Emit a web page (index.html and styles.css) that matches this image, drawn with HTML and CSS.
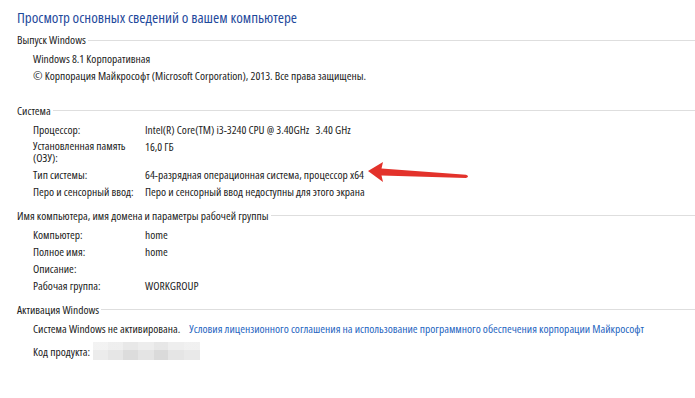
FILE: index.html
```html
<!DOCTYPE html>
<html lang="ru">
<head>
<meta charset="utf-8">
<link rel="stylesheet" href="styles.css">
</head>
<body>
<div class="page">
  <h1 class="title">Просмотр основных сведений о вашем компьютере</h1>

  <section class="group first">
    <div class="group-head"><span>Выпуск Windows</span></div>
    <div class="plain">Windows 8.1 Корпоративная</div>
    <div class="plain">© Корпорация Майкрософт (Microsoft Corporation), 2013. Все права защищены.</div>
  </section>

  <section class="group">
    <div class="group-head"><span>Система</span></div>
    <div class="row"><div class="k">Процессор:</div><div class="v">Intel(R) Core(TM) i3-3240 CPU @ 3.40GHz&nbsp;&nbsp; 3.40 GHz</div></div>
    <div class="row tall"><div class="k wrap"><div>Установленная память</div><div>(ОЗУ):</div></div><div class="v">16,0 ГБ</div></div>
    <div class="row"><div class="k">Тип системы:</div><div class="v arrowed">64-разрядная операционная система, процессор x64<svg class="arrow" width="106" height="25" viewBox="0 0 106 25"><path d="M2 11 L17 2 L15.5 8.5 L100 14.8 Q104 16.5 100 18 L15.5 15.5 L17 22 Z" fill="#e3322b"/></svg></div></div>
    <div class="row"><div class="k">Перо и сенсорный ввод:</div><div class="v">Перо и сенсорный ввод недоступны для этого экрана</div></div>
  </section>

  <section class="group">
    <div class="group-head"><span>Имя компьютера, имя домена и параметры рабочей группы</span></div>
    <div class="row"><div class="k">Компьютер:</div><div class="v">home</div></div>
    <div class="row"><div class="k">Полное имя:</div><div class="v">home</div></div>
    <div class="row"><div class="k">Описание:</div><div class="v"></div></div>
    <div class="row"><div class="k">Рабочая группа:</div><div class="v">WORKGROUP</div></div>
  </section>

  <section class="group">
    <div class="group-head"><span>Активация Windows</span></div>
    <div class="plain">Система Windows не активирована.<a class="link" href="#">Условия лицензионного соглашения на использование программного обеспечения корпорации Майкрософт</a></div>
    <div class="plain key">Код продукта:<span class="blur"></span></div>
  </section>
</div>
</body>
</html>
```
FILE: styles.css
```css
html, body { margin: 0; padding: 0; background: #fff; }
body {
  font-family: "Open Sans", "Noto Sans", sans-serif;
  font-stretch: 87.5%;
  font-size: 11.5px;
  color: #1c1c1c;
}
.page { padding: 7px 0 0 17px; }
.title {
  font-weight: normal;
  font-size: 15px;
  color: #1f4a9c;
  margin: 0 0 4px 0;
  line-height: 20px;
  white-space: nowrap;
}
.group { margin-bottom: 7px; }
.group.first { margin-bottom: 17.5px; }
.group-head { display: flex; align-items: center; line-height: 17px; margin-bottom: 2px; white-space: nowrap; }
.group-head::after { content: ""; flex: 1; height: 1px; background: #dedede; margin: 1px 0 0 2px; }
.plain { padding-left: 16px; line-height: 17px; white-space: nowrap; }
.row { display: flex; padding-left: 16px; line-height: 17px; white-space: nowrap; }
.row.tall { height: 28px; }
.k { width: 112px; flex: none; }
.k.wrap { line-height: 12px; padding-top: 2.5px; }
.v { position: relative; }
.arrow { position: absolute; left: calc(100% + 2px); top: -6px; }
.link { color: #1f66bf; text-decoration: none; margin-left: 9px; }
.key { display: flex; align-items: center; margin-top: 5.5px; }
.blur {
  display: inline-block;
  width: 107px;
  height: 18px;
  margin-left: 3px;
  background:
    linear-gradient(180deg, rgba(255,255,255,0.35) 0 45%, rgba(0,0,0,0) 45% 100%),
    linear-gradient(90deg, #ececec 0 14%, #e6e6e6 14% 28%, #dcdcdc 28% 42%, #e4e4e4 42% 57%, #dadada 57% 70%, #e5e5e5 70% 85%, #e9e9e9 85% 100%);
}
```
